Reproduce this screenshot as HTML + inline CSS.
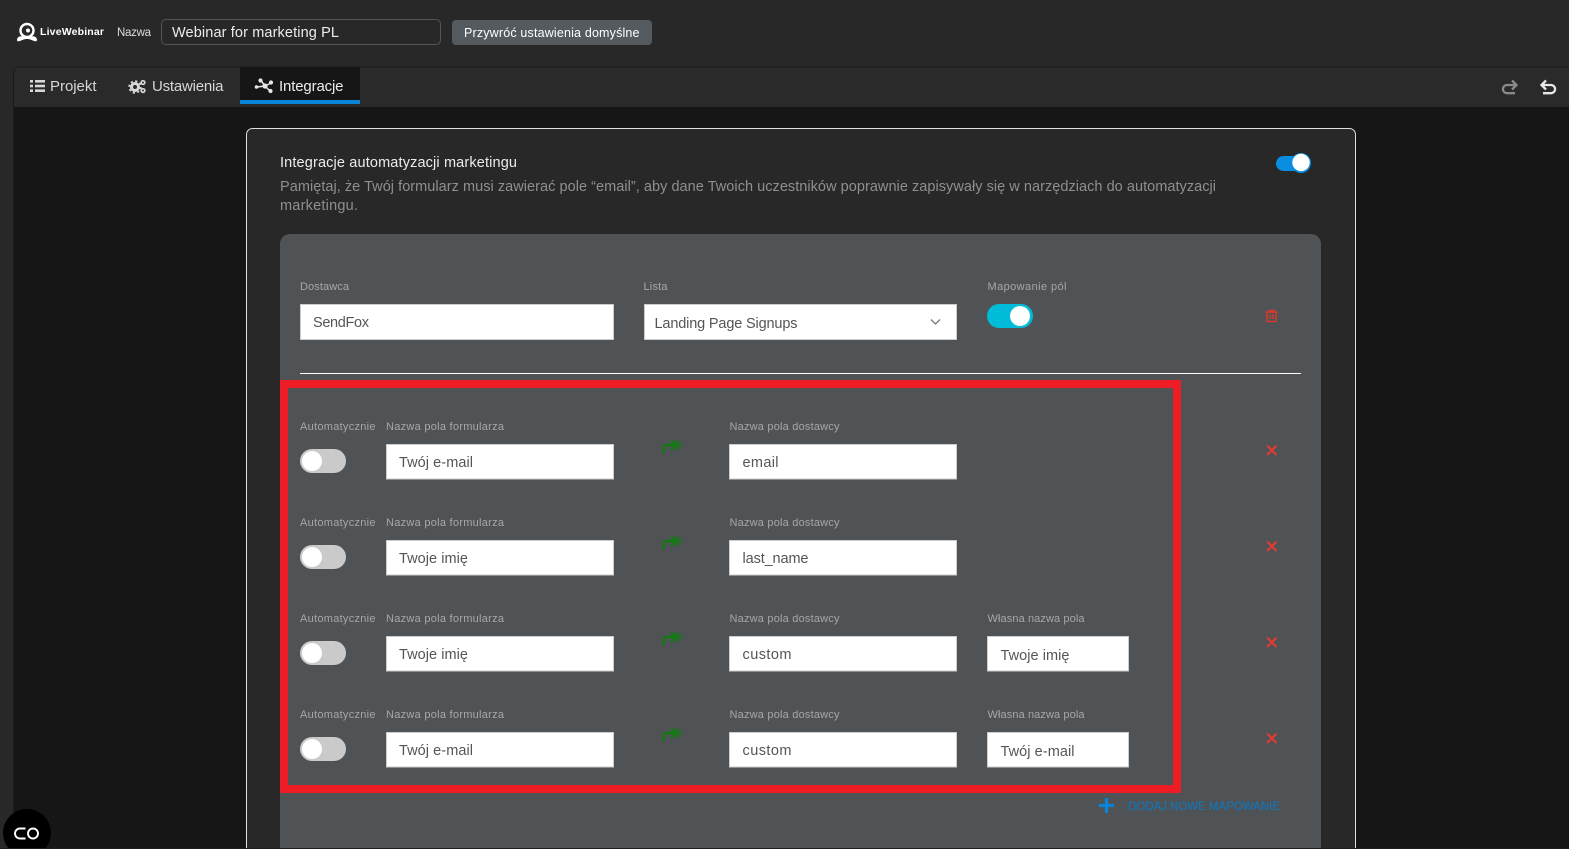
<!DOCTYPE html>
<html lang="pl">
<head>
<meta charset="utf-8">
<title>LiveWebinar</title>
<style>
html,body{margin:0;padding:0;background:#161616;width:1569px;height:849px;overflow:hidden}
svg{display:block;position:absolute;left:0;top:0}
text{font-family:"Liberation Sans",sans-serif}
.l{font-size:11px;fill:#a5a7a9}
.v{font-size:14.5px;fill:#555}
.t{font-size:15px;fill:#d6d6d6}
.f{fill:#fff;stroke:#ccc;stroke-width:1}
</style>
</head>
<body>
<svg width="1569" height="849" viewBox="0 0 1569 849" xmlns="http://www.w3.org/2000/svg">
<!-- page frame -->
<rect width="1569" height="849" fill="#282828"/>
<path d="M13.5 849V73a6 6 0 0 1 6-6H1569V849z" fill="#161616"/>
<path d="M13.5 107V73a6 6 0 0 1 6-6H1569v40z" fill="#2a2a2a"/>
<path d="M13.5 849V73a6 6 0 0 1 6-6H1569" fill="none" stroke="#1b1b1b"/>

<!-- logo -->
<circle cx="27" cy="30.5" r="6.5" fill="none" stroke="#fff" stroke-width="2.400"/>
<circle cx="28" cy="30.5" r="2" fill="#fff"/>
<path d="M17 40c0-3 3-4.500 5.500-3.500 3 1.200 6 1.200 9 0 2.500-1 5.500.5 5.500 3.500 0 1.500-1.500 1.500-3 1-2-.8-4-2-7-2s-5 1.200-7 2c-1.500.5-3 .5-3-1z" fill="#fff"/>
<text x="40" y="35" font-size="10.500" font-weight="700" fill="#fff" textLength="64">LiveWebinar</text>

<text x="117" y="36" font-size="11.500" fill="#dcdcdc" textLength="34">Nazwa</text>
<rect x="161.500" y="19.500" width="279" height="25" rx="4.500" fill="#282828" stroke="#555"/>
<text x="172" y="37" font-size="14.500" fill="#ececec" textLength="167">Webinar for marketing PL</text>
<rect x="452" y="20" width="200" height="25" rx="4" fill="#555a5f"/>
<text x="464" y="37" font-size="12.500" fill="#fff" textLength="175.500">Przywróć ustawienia domyślne</text>

<!-- tabs -->
<g fill="#d8d8d8">
<rect x="30" y="80" width="3" height="2.600"/><rect x="35" y="80" width="10" height="2.600"/>
<rect x="30" y="84.700" width="3" height="2.600"/><rect x="35" y="84.700" width="10" height="2.600"/>
<rect x="30" y="89.400" width="3" height="2.600"/><rect x="35" y="89.400" width="10" height="2.600"/>
</g>
<text class="t" x="50" y="91" textLength="46.500">Projekt</text>

<g fill="none" stroke="#d8d8d8">
<circle cx="135" cy="87" r="3.500" stroke-width="3"/>
<circle cx="135" cy="87" r="5.800" stroke-width="1.800" stroke-dasharray="2.200 2.350"/>
<circle cx="143" cy="82.500" r="1.800" stroke-width="1.700"/>
<circle cx="143" cy="90.500" r="1.800" stroke-width="1.700"/>
</g>
<text class="t" x="152" y="91" textLength="71.500">Ustawienia</text>

<rect x="240" y="67" width="120" height="37" fill="#161616"/>
<rect x="240" y="100" width="120" height="4" fill="#0a84d6"/>
<path d="M257 87L265 86M261 80.500L265 86M271 83L265 86M270 91L265 86" fill="none" stroke="#e6e6e6" stroke-width="1.500"/>
<g fill="#e6e6e6">
<circle cx="256.500" cy="87" r="1.800"/>
<circle cx="260.500" cy="80.500" r="2.100"/>
<circle cx="271" cy="82.500" r="2.100"/>
<circle cx="270.500" cy="91" r="2.100"/>
<circle cx="265" cy="86" r="2.600"/>
</g>
<text x="279" y="91" font-size="15" fill="#ececec" textLength="64.500">Integracje</text>

<!-- undo / redo -->
<g fill="none" stroke-width="2.300">
<path d="M1516 85H1507a4 4 0 0 0 0 8.200H1515M1512 80.500L1516.500 85L1512 89.500" stroke="#8a8a8a"/>
<path d="M1542 85H1551a4 4 0 0 1 0 8.200H1543M1546 80.500L1541.500 85L1546 89.500" stroke="#e8e8e8"/>
</g>

<!-- card -->
<path d="M246.500 849V134.500a6 6 0 0 1 6-6H1349.500a6 6 0 0 1 6 6V849z" fill="#282828"/>
<path d="M246.500 849V134.500a6 6 0 0 1 6-6H1349.500a6 6 0 0 1 6 6V849" fill="none" stroke="#dde0e6"/>
<text x="280" y="167" font-size="14.500" fill="#ececec" textLength="237">Integracje automatyzacji marketingu</text>
<text x="280" y="191" font-size="14.500" fill="#8e8f8f" textLength="936">Pamiętaj, że Twój formularz musi zawierać pole “email”, aby dane Twoich uczestników poprawnie zapisywały się w narzędziach do automatyzacji</text>
<text x="280" y="210" font-size="14.500" fill="#8e8f8f" textLength="78">marketingu.</text>
<rect x="1276" y="156" width="32" height="15" rx="7.500" fill="#0a8ee0"/>
<circle cx="1301" cy="163" r="10" fill="#0a8ee0"/>
<circle cx="1301" cy="162.500" r="8.700" fill="#fff"/>

<!-- panel -->
<path d="M280 849V244a10 10 0 0 1 10-10H1311a10 10 0 0 1 10 10V849z" fill="#505356"/>
<text class="l" x="300" y="290" textLength="49">Dostawca</text>
<text class="l" x="643.500" y="290" textLength="24">Lista</text>
<text class="l" x="987.500" y="290" textLength="79">Mapowanie pól</text>
<rect class="f" x="300.500" y="304.500" width="313" height="35"/>
<text class="v" x="313" y="327" textLength="56">SendFox</text>
<rect class="f" x="644.500" y="304.500" width="312" height="35"/>
<text class="v" x="654.500" y="328" textLength="143">Landing Page Signups</text>
<path d="M931 319.500L935.500 324L940 319.500" fill="none" stroke="#777" stroke-width="1.300"/>
<rect x="987" y="304" width="46" height="24" rx="12" fill="#00bcd9"/>
<circle cx="1020" cy="316" r="10" fill="#fff"/>
<g fill="none" stroke="#d8392c" stroke-width="1.500" transform="translate(1 0)">
<path d="M1264.500 312H1276.500M1268 312V310.500H1273V312"/>
<rect x="1266" y="312" width="9" height="9.500" rx="1"/>
<path d="M1269 314.500V319M1272 314.500V319"/>
</g>
<rect x="300" y="373" width="1001" height="1" fill="#fff"/>

<!-- row 1 -->
<text class="l" x="300" y="430" textLength="75.500">Automatycznie</text>
<text class="l" x="386" y="430" textLength="118">Nazwa pola formularza</text>
<text class="l" x="729.500" y="430" textLength="110">Nazwa pola dostawcy</text>
<rect x="300" y="449" width="46" height="24" rx="12" fill="#cacaca"/><circle cx="312" cy="461" r="10" fill="#fff"/>
<rect class="f" x="386.500" y="444.500" width="227" height="34.500"/>
<text class="v" x="399" y="467" textLength="74">Twój e-mail</text>
<path d="M663.500 453V447.500a2.500 2.500 0 0 1 2.500-2.500H676.500M671 440.500L675.500 445L671 449.500M676 440.500L680.500 445L676 449.500" fill="none" stroke="#0a7d0a" stroke-width="2.200"/>
<rect class="f" x="729.500" y="444.500" width="227" height="34.500"/>
<text class="v" x="742.500" y="467" textLength="36">email</text>
<path d="M1267 445.500L1276.500 455M1276.500 445.500L1267 455" stroke="#e2392d" stroke-width="2.200"/>

<!-- row 2 -->
<text class="l" x="300" y="526" textLength="75.500">Automatycznie</text>
<text class="l" x="386" y="526" textLength="118">Nazwa pola formularza</text>
<text class="l" x="729.500" y="526" textLength="110">Nazwa pola dostawcy</text>
<rect x="300" y="545" width="46" height="24" rx="12" fill="#cacaca"/><circle cx="312" cy="557" r="10" fill="#fff"/>
<rect class="f" x="386.500" y="540.500" width="227" height="34.500"/>
<text class="v" x="399" y="563" textLength="69">Twoje imię</text>
<path d="M663.500 549V543.500a2.500 2.500 0 0 1 2.500-2.500H676.500M671 536.500L675.500 541L671 545.500M676 536.500L680.500 541L676 545.500" fill="none" stroke="#0a7d0a" stroke-width="2.200"/>
<rect class="f" x="729.500" y="540.500" width="227" height="34.500"/>
<text class="v" x="742.500" y="563" textLength="66">last_name</text>
<path d="M1267 541.500L1276.500 551M1276.500 541.500L1267 551" stroke="#e2392d" stroke-width="2.200"/>

<!-- row 3 -->
<text class="l" x="300" y="622" textLength="75.500">Automatycznie</text>
<text class="l" x="386" y="622" textLength="118">Nazwa pola formularza</text>
<text class="l" x="729.500" y="622" textLength="110">Nazwa pola dostawcy</text>
<text class="l" x="987.500" y="622" textLength="97">Własna nazwa pola</text>
<rect x="300" y="641" width="46" height="24" rx="12" fill="#cacaca"/><circle cx="312" cy="653" r="10" fill="#fff"/>
<rect class="f" x="386.500" y="636.500" width="227" height="34.500"/>
<text class="v" x="399" y="659" textLength="69">Twoje imię</text>
<path d="M663.500 645V639.500a2.500 2.500 0 0 1 2.500-2.500H676.500M671 632.500L675.500 637L671 641.500M676 632.500L680.500 637L676 641.500" fill="none" stroke="#0a7d0a" stroke-width="2.200"/>
<rect class="f" x="729.500" y="636.500" width="227" height="34.500"/>
<text class="v" x="742.500" y="659" textLength="49">custom</text>
<rect class="f" x="987.500" y="636.500" width="141" height="34.500"/>
<text class="v" x="1000.500" y="660" textLength="69">Twoje imię</text>
<path d="M1267 637.500L1276.500 647M1276.500 637.500L1267 647" stroke="#e2392d" stroke-width="2.200"/>

<!-- row 4 -->
<text class="l" x="300" y="718" textLength="75.500">Automatycznie</text>
<text class="l" x="386" y="718" textLength="118">Nazwa pola formularza</text>
<text class="l" x="729.500" y="718" textLength="110">Nazwa pola dostawcy</text>
<text class="l" x="987.500" y="718" textLength="97">Własna nazwa pola</text>
<rect x="300" y="737" width="46" height="24" rx="12" fill="#cacaca"/><circle cx="312" cy="749" r="10" fill="#fff"/>
<rect class="f" x="386.500" y="732.500" width="227" height="34.500"/>
<text class="v" x="399" y="755" textLength="74">Twój e-mail</text>
<path d="M663.500 741V735.500a2.500 2.500 0 0 1 2.500-2.500H676.500M671 728.500L675.500 733L671 737.500M676 728.500L680.500 733L676 737.500" fill="none" stroke="#0a7d0a" stroke-width="2.200"/>
<rect class="f" x="729.500" y="732.500" width="227" height="34.500"/>
<text class="v" x="742.500" y="755" textLength="49">custom</text>
<rect class="f" x="987.500" y="732.500" width="141" height="34.500"/>
<text class="v" x="1000.500" y="756" textLength="74">Twój e-mail</text>
<path d="M1267 733.500L1276.500 743M1276.500 733.500L1267 743" stroke="#e2392d" stroke-width="2.200"/>

<!-- highlight -->
<rect x="284" y="384" width="893" height="405" fill="none" stroke="#ee1c25" stroke-width="8"/>

<!-- add -->
<path d="M1099 805.500H1114M1106.500 798V813" stroke="#0a84d6" stroke-width="3.200"/>
<text x="1128" y="810" font-size="11.500" fill="#0b78c4" textLength="152">DODAJ NOWE MAPOWANIE</text>

<!-- chat bubble -->
<path d="M9.100 849A24 24 0 1 1 44.900 849z" fill="#000"/>
<path d="M25.500 828.500H20a4.800 4.800 0 0 0 0 10H25.500" fill="none" stroke="#fff" stroke-width="1.900"/>
<circle cx="33" cy="833.500" r="5" fill="none" stroke="#fff" stroke-width="1.900"/>

<!-- bottom edge row -->
<rect x="0" y="848" width="1569" height="1" fill="#1e1e1e"/>
</svg>
</body>
</html>
